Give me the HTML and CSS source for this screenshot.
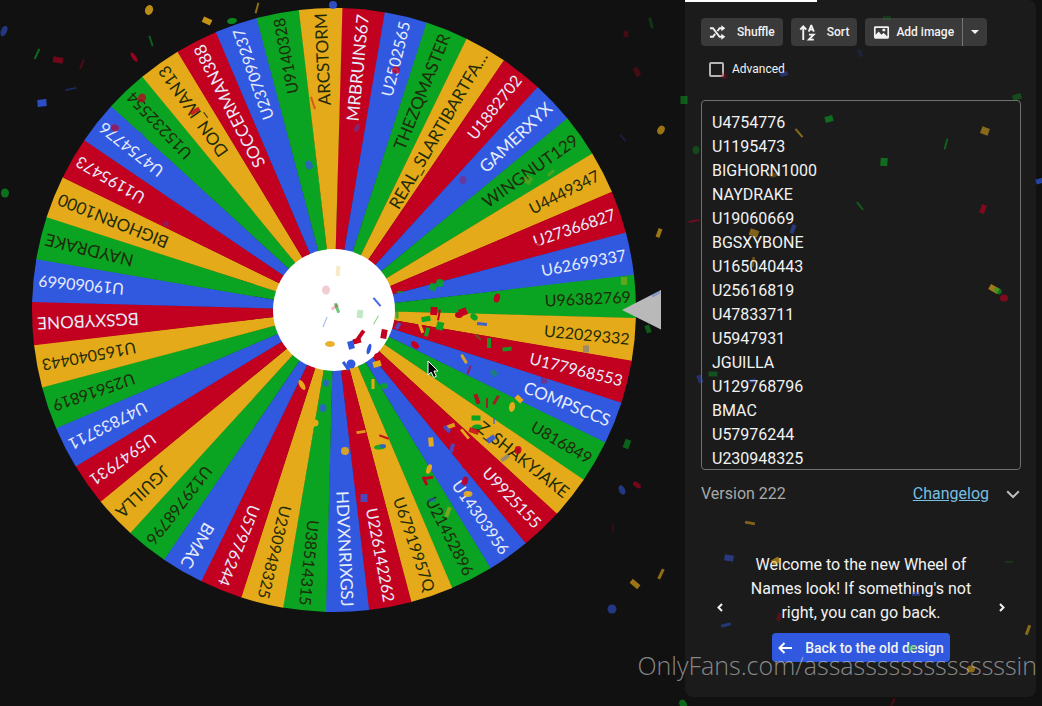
FILE: index.html
```html
<!DOCTYPE html>
<html lang="en">
<head>
<meta charset="utf-8">
<title>Wheel of Names</title>
<link rel="stylesheet" href="styles.css">
</head>
<body>
<div class="app">
  <main class="stage">
    <svg class="wheel" id="wheel" viewBox="0 0 685 706" role="img" aria-label="Wheel with 44 names"></svg>
  </main>

  <aside class="panel">
    <div class="tab-indicator"></div>
    <div class="panel-body">
      <div class="toolbar">
        <button class="btn" type="button">
          <svg class="icon" viewBox="0 0 18 18"><path class="stroke" d="M1 4.500h3.200l7 9H14M1 13.500h3.200l2.300-3M9 7.400l2.200-2.900H14"/><path d="M13 1.300 17.300 4.500 13 7.700zM13 10.300l4.300 3.200-4.300 3.200z"/></svg>
          <span>Shuffle</span>
        </button>
        <button class="btn" type="button">
          <svg class="icon" viewBox="0 0 18 18"><path class="stroke" d="M4.500 17V3M1.300 6 4.500 2.500 7.700 6"/><path class="thin" d="M10.300 8 12.800 1.800h.4L15.700 8M11.200 6h3.600M10.500 11.200h5L10.500 16.500h5.200"/></svg>
          <span>Sort</span>
        </button>
        <div class="split">
          <button class="btn split-main" type="button">
            <svg class="icon" viewBox="0 0 18 18"><path fill-rule="evenodd" d="M2.500 2.500h13A1.500 1.500 0 0 1 17 4v10a1.500 1.500 0 0 1-1.500 1.500h-13A1.500 1.500 0 0 1 1 14V4a1.500 1.500 0 0 1 1.500-1.500zM2.800 4.300v7.200L6 8l3 3.400 2.200-2.200 4 4V4.300zM10 5h3v2.600h-3z"/></svg>
            <span>Add image</span>
          </button>
          <button class="btn split-toggle" type="button" aria-label="More image options">
            <svg class="caret" viewBox="0 0 8 4"><path d="M0 0h8L4 4z"/></svg>
          </button>
        </div>
      </div>

      <label class="advanced"><input type="checkbox" class="checkbox"><span>Advanced</span></label>

      <textarea class="names" rows="15" aria-label="Names" spellcheck="false">U4754776
U1195473
BIGHORN1000
NAYDRAKE
U19060669
BGSXYBONE
U165040443
U25616819
U47833711
U5947931
JGUILLA
U129768796
BMAC
U57976244
U230948325</textarea>

      <div class="version">
        <span class="version-text">Version 222</span>
        <a class="changelog" href="#">Changelog</a>
        <button class="plain" type="button" aria-label="Expand">
          <svg class="chevron" viewBox="0 0 14 9"><path d="M1.200 1.300 7 7l5.800-5.700"/></svg>
        </button>
      </div>

      <section class="carousel">
        <button class="plain arrow" type="button" aria-label="Previous"><svg class="angle" viewBox="0 0 6 9"><path d="M5 1 1.500 4.500 5 8"/></svg></button>
        <div class="slide">
          <p class="welcome">Welcome to the new Wheel of Names look! If something's not right, you can go back.</p>
          <button class="back" type="button">
            <svg class="back-icon" viewBox="0 0 14 12"><path d="M14 6H1.500M6.500 1l-5 5 5 5"/></svg>
            <span>Back to the old design</span>
          </button>
        </div>
        <button class="plain arrow" type="button" aria-label="Next"><svg class="angle" viewBox="0 0 6 9"><path d="M1 1l3.500 3.500L1 8"/></svg></button>
      </section>
    </div>
  </aside>

  <svg class="confetti" id="confetti" viewBox="0 0 1042 706" preserveAspectRatio="xMinYMin meet" aria-hidden="true"></svg>
  <div class="watermark">OnlyFans.com/assassssssssssssssin</div>
</div>
<script src="wheel.js"></script>
</body>
</html>
```
FILE: styles.css
```css
* { box-sizing: border-box; }

body {
  margin: 0;
  background: #111111;
  color: #f2f2f2;
  font-family: Roboto, "Liberation Sans", sans-serif;
  font-size: 16px;
  line-height: 24px;
}

.app {
  position: relative;
  display: flex;
  align-items: flex-start;
  min-height: 100vh;
  overflow: hidden;
}

.stage { flex: 1; min-width: 0; }
.wheel { display: block; width: 100%; }

.red { fill: #c20020; }
.blue { fill: #3159e0; }
.green { fill: #0aa322; }
.yellow { fill: #e5aa19; }
.hub { fill: #ffffff; }
.pointer { fill: #b9b9b9; }
.cursor { fill: #000000; stroke: #ffffff; stroke-width: 1; }

.name {
  font-family: Lato, sans-serif;
  font-size: 17px;
  text-anchor: end;
}
.name-number { font-size: 16px; }
.name-light { fill: #e6ebfa; }
.name-dark { fill: #1f2a08; }

.panel {
  width: 351px;
  margin-right: 6px;
  background: #1b1b1b;
  border-radius: 0 8px 8px 8px;
}
.tab-indicator { width: 132px; height: 2px; background: #ffffff; }
.panel-body {
  display: flex;
  flex-direction: column;
  padding: 16px 15px 35px 16px;
}

button { font: inherit; color: inherit; border: 0; cursor: pointer; }

.toolbar { display: flex; gap: 8px; }
.btn {
  display: flex;
  align-items: center;
  gap: 11px;
  height: 28px;
  padding: 0 8px;
  border-radius: 4px;
  background: #3a3a3a;
  font-size: 12px;
  font-weight: 500;
  line-height: 20px;
}
.split { display: flex; }
.split-main { gap: 6px; border-radius: 4px 0 0 4px; border-right: 1px solid #747474; }
.split-toggle { border-radius: 0 4px 4px 0; }
.icon { width: 17px; height: 17px; fill: #f2f2f2; }
.stroke { fill: none; stroke: #f2f2f2; stroke-width: 2; }
.thin { fill: none; stroke: #f2f2f2; stroke-width: 2; }
.caret { width: 8px; height: 4px; fill: #f2f2f2; }

.advanced {
  display: flex;
  align-items: center;
  gap: 8px;
  height: 20px;
  margin: 13px 0 21px 8px;
  font-size: 12px;
}
.checkbox {
  appearance: none;
  width: 15px;
  height: 15px;
  margin: 0;
  border: 2px solid #b5b5b5;
  border-radius: 2px;
}

.names {
  display: block;
  width: 100%;
  height: 370px;
  padding: 10px 10px 0;
  border: 1px solid #707070;
  border-radius: 4px;
  background: transparent;
  color: #f2f2f2;
  font: inherit;
  resize: none;
  overflow: hidden;
}

.version { display: flex; align-items: center; margin-top: 12px; }
.version-text { flex: 1; color: #a8a8a8; }
.changelog { color: #77bfe0; }
.plain { display: flex; padding: 0; background: none; }
.chevron { width: 14px; height: 9px; margin: 0 1px 0 17px; fill: none; stroke: #bdbdbd; stroke-width: 2; }

.carousel {
  display: flex;
  align-items: center;
  margin: 47px 16px 0;
}
.arrow { width: 6px; }
.angle { width: 6px; height: 9px; fill: none; stroke: #f2f2f2; stroke-width: 2; }
.slide {
  flex: 1;
  display: flex;
  flex-direction: column;
  align-items: center;
  gap: 8px;
  padding: 0 24px;
}
.welcome { margin: 0; text-align: center; }
.back {
  display: flex;
  align-items: center;
  gap: 13px;
  height: 29px;
  padding: 0 6px;
  border-radius: 4px;
  background: #3159e0;
  font-size: 14px;
  font-weight: 500;
}
.back-icon { width: 14px; height: 12px; fill: none; stroke: #ffffff; stroke-width: 2; }

.confetti {
  position: absolute;
  top: 0;
  left: 0;
  width: 100%;
  pointer-events: none;
}

.watermark {
  position: absolute;
  right: 5px;
  bottom: 25px;
  color: rgba(200, 200, 200, 0.65);
  font-family: "Open Sans", "Noto Sans", sans-serif;
  font-size: 25px;
  font-weight: 300;
  line-height: 32px;
  white-space: nowrap;
  pointer-events: none;
}
```
FILE: wheel.js
```js
const NS = "http://www.w3.org/2000/svg";
const CX = 334, CY = 310, RADIUS = 302, HUB = 61, TEXT_RADIUS = 297;
const COLORS = ["red", "blue", "green", "yellow"];
const NAMES = [
  "MRBRUINS67", "U2502565", "THEZQMASTER", "REAL_SLARTIBARTFA…", "U1882702", "GAMERXYX",
  "WINGNUT129", "U4449347", "U27366827", "U62699337", "U96382769", "U22029332", "U177968553",
  "COMPSCCS", "U816849", "Z_SHAKYJAKE", "U9925155", "U14303956", "U21452896", "U67919957Q",
  "U226142262", "HDVXNRIXGSJ", "U38514315", "U230948325", "U57976244", "BMAC", "U129768796",
  "JGUILLA", "U5947931", "U47833711", "U25616819", "U165040443", "BGSXYBONE", "U19060669",
  "NAYDRAKE", "BIGHORN1000", "U1195473", "U4754776", "U15232554", "DON_IVAN13",
  "SOCCERMAN388", "U237099237", "U9140328", "ARCSTORM"
];
const START = -88.5;

function add(parent, tag, attrs, text) {
  const el = document.createElementNS(NS, tag);
  for (const key in attrs) el.setAttribute(key, attrs[key]);
  if (text) el.textContent = text;
  parent.appendChild(el);
  return el;
}

function point(deg) {
  const a = deg * Math.PI / 180;
  return (CX + RADIUS * Math.cos(a)).toFixed(2) + " " + (CY + RADIUS * Math.sin(a)).toFixed(2);
}

const wheel = document.getElementById("wheel");
const step = 360 / NAMES.length;
NAMES.forEach((name, i) => {
  const from = START + i * step;
  const color = COLORS[i % 4];
  add(wheel, "path", {
    class: color,
    d: `M${CX} ${CY}L${point(from)}A${RADIUS} ${RADIUS} 0 0 1 ${point(from + step + 0.1)}Z`
  });
});
NAMES.forEach((name, i) => {
  const mid = START + (i + 0.5) * step;
  const size = /^U\d/.test(name) ? " name-number" : "";
  add(wheel, "text", {
    class: "name" + size + (i % 4 < 2 ? " name-light" : " name-dark"),
    x: TEXT_RADIUS,
    y: 6,
    transform: `translate(${CX} ${CY}) rotate(${mid.toFixed(2)})`
  }, name);
});
add(wheel, "circle", { class: "hub", cx: CX, cy: CY, r: HUB });
add(wheel, "path", { class: "pointer", d: "M622 310 661 290V329.500Z" });

/* Confetti pieces: x, y, width, height, rotation, color, opacity, round */
const PIECES = [
  [149,10,8,10,20,"yellow",.8,1],[207,21,9,6,25,"yellow",.85,0],[232,21,10,6,-10,"green",.8,1],
  [257,8,2,11,15,"yellow",.6,0],[4,31,6,11,25,"blue",.55,1],[58,60,10,6,10,"red",.55,0],
  [37,54,2,11,25,"green",.6,0],[134,57,4,11,-35,"red",.75,1],[151,41,2,11,-18,"green",.55,0],
  [82,64,2,10,22,"red",.35,0],[71,89,11,2,-12,"blue",.35,0],[42,103,9,7,-5,"blue",.85,0],
  [5,193,8,9,0,"green",.65,1],[333,5,8,8,0,"blue",.85,1],[142,98,8,9,20,"red",.75,1],
  [115,128,8,7,20,"red",.65,1],[195,111,10,4,-30,"red",.8,0],[313,103,2,13,-18,"red",.45,0],
  [309,165,7,9,-25,"blue",.8,1],[141,135,7,8,0,"blue",.4,1],[166,224,6,6,0,"blue",.25,1],
  [332,33,7,8,0,"yellow",.7,1],[357,128,5,8,20,"blue",.4,1],[396,70,8,7,20,"red",.8,1],
  [463,180,7,8,0,"red",.35,1],[528,180,8,8,30,"yellow",.25,0],[551,173,8,3,-40,"yellow",.3,0],
  [651,23,3,11,-15,"green",.25,0],[626,34,5,7,0,"red",.3,1],[637,72,5,9,-25,"red",.3,0],
  [661,130,7,9,30,"yellow",.65,1],[659,233,4,9,20,"yellow",.65,0],[623,138,2,9,-40,"blue",.2,0],
  [537,246,9,6,5,"red",.7,1],[624,281,6,8,0,"yellow",.4,0],[656,294,9,3,-30,"blue",.35,0],
  [648,329,5,8,-20,"green",.5,0],[627,444,6,9,20,"green",.55,0],[622,490,6,10,-25,"blue",.55,1],
  [637,485,9,5,35,"red",.55,1],[612,609,9,9,0,"blue",.55,1],[635,584,10,5,40,"yellow",.65,0],
  [661,574,3,11,25,"yellow",.6,0],[613,528,2,9,0,"red",.2,0],[683,704,7,9,-30,"green",.6,1],
  [326,290,8,9,0,"red",.2,1],[338,271,4,10,5,"yellow",.25,0],[337,308,3,10,-20,"green",.6,0],
  [335,307,8,3,-35,"red",.25,0],[360,314,6,8,5,"green",.25,0],[377,302,2,11,-40,"blue",.9,0],
  [325,322,1,11,22,"blue",.5,0],[376,320,1,10,30,"green",.5,0],[330,344,10,6,0,"yellow",.9,1],
  [351,345,6,8,-15,"blue",1,0],[369,349,4,11,15,"blue",1,1],[357,341,8,5,-15,"red",1,0],
  [360,336,4,13,35,"red",1,0],[384,334,6,9,10,"red",1,0],[351,364,9,9,0,"blue",1,1],
  [346,366,3,10,-35,"blue",1,0],[378,357,8,8,0,"red",1,1],[377,364,8,6,-15,"yellow",1,0],
  [373,384,3,10,0,"yellow",1,0],[384,386,8,6,0,"green",.9,1],[326,383,6,7,0,"blue",.8,1],
  [323,408,7,8,0,"blue",.8,1],[302,385,5,11,-30,"yellow",1,1],[315,423,7,7,0,"yellow",1,1],
  [345,451,8,8,0,"yellow",.9,1],[364,498,7,8,0,"blue",.8,0],[440,283,8,8,0,"green",.9,1],
  [433,287,7,7,20,"green",.9,0],[497,298,6,9,15,"red",1,1],[434,311,7,8,5,"red",1,0],
  [439,315,2,11,10,"red",1,0],[459,315,8,6,-5,"red",1,1],[463,312,8,7,-20,"red",1,0],
  [426,319,9,5,-10,"green",1,0],[440,326,7,8,15,"green",1,0],[427,332,4,9,15,"green",1,0],
  [421,328,3,10,-20,"yellow",1,0],[474,317,8,6,40,"green",1,1],[482,324,10,3,5,"blue",.9,0],
  [397,315,3,7,0,"green",.7,0],[400,292,7,2,0,"green",.7,0],[398,326,7,4,-60,"blue",.8,0],
  [415,345,9,6,40,"red",1,1],[489,343,4,10,0,"green",.9,0],[507,349,9,4,-5,"green",.9,0],
  [478,337,8,2,45,"green",.5,0],[531,338,10,2,0,"yellow",.5,0],[464,359,3,10,-30,"yellow",.9,0],
  [469,370,2,9,20,"red",.7,0],[494,373,7,5,50,"green",.5,0],[586,349,6,7,0,"blue",.4,0],
  [544,380,6,7,0,"red",.4,0],[477,399,4,10,-20,"red",.9,0],[487,403,2,10,0,"red",.8,0],
  [496,400,3,10,30,"red",.8,0],[519,399,8,5,45,"yellow",1,0],[512,407,6,10,10,"yellow",1,1],
  [476,418,9,5,0,"green",1,0],[477,427,10,5,-5,"green",1,1],[474,431,10,5,20,"red",.8,0],
  [494,421,2,6,0,"blue",.6,0],[491,439,9,5,-35,"blue",.9,0],[518,450,7,8,10,"red",.9,1],
  [505,458,9,4,-35,"blue",.4,0],[451,426,8,4,-20,"yellow",.9,0],[447,429,8,4,45,"blue",.8,0],
  [465,434,3,12,-40,"yellow",1,0],[431,442,5,9,-5,"yellow",1,0],[452,448,4,9,15,"blue",.8,0],
  [429,469,5,10,20,"yellow",1,1],[428,478,10,3,-10,"red",1,0],[425,481,3,9,-25,"red",1,0],
  [361,432,9,3,-8,"yellow",.9,0],[384,437,10,2,20,"red",.9,0],[380,447,12,5,-5,"green",.9,1],
  [383,446,6,4,0,"blue",.8,1],[466,465,9,2,-35,"red",.8,0],[465,481,6,9,20,"red",.9,1],
  [468,494,9,6,0,"yellow",.9,1],[448,512,4,10,20,"yellow",.5,0],[432,500,7,4,0,"blue",.5,0],
  [684,100,7,8,0,"green",.5,0],[696,150,7,8,0,"green",.35,1],[724,76,6,5,20,"red",.3,0],
  [784,74,8,4,-15,"blue",.4,0],[1017,97,9,6,-20,"green",.35,0],[829,119,8,6,-15,"green",.6,0],
  [799,133,2,11,-40,"yellow",.55,0],[985,131,8,7,20,"yellow",.55,0],[946,144,2,11,15,"green",.5,0],
  [884,162,7,8,5,"green",.6,0],[773,175,8,5,0,"yellow",.3,1],[694,221,11,2,-10,"red",.5,0],
  [860,206,2,10,-38,"green",.45,0],[983,209,5,9,20,"red",.6,0],[754,233,9,7,20,"yellow",.5,0],
  [793,229,4,9,20,"blue",.5,0],[753,262,3,10,10,"yellow",.35,0],[994,289,10,6,30,"yellow",.65,0],
  [998,291,8,6,30,"green",.6,1],[1004,298,8,7,0,"red",.6,1],[1040,181,8,5,-15,"blue",.7,0],
  [713,374,9,5,0,"green",.4,0],[700,379,5,8,-20,"blue",.4,0],[752,381,8,4,-10,"blue",.3,0],
  [860,53,4,8,-25,"blue",.15,0],[887,18,8,4,0,"green",.2,0],[750,523,10,3,10,"yellow",.5,0],
  [729,558,9,6,10,"blue",.5,0],[776,561,8,6,-30,"yellow",.6,0],[726,625,10,3,-15,"blue",.45,0],
  [779,617,4,8,20,"red",.35,0],[916,594,8,4,0,"blue",.45,0],[1028,630,3,10,20,"yellow",.55,0],
  [912,648,8,6,0,"green",.4,0],[971,669,8,7,0,"yellow",.55,1],[1009,562,8,2,0,"green",.2,0],
  [893,702,2,8,25,"red",.35,0]
];
const confetti = document.getElementById("confetti");
PIECES.forEach(([x, y, w, h, rot, color, opacity, round]) => {
  const attrs = { class: color, opacity, transform: `translate(${x} ${y}) rotate(${rot})` };
  if (round) add(confetti, "ellipse", { ...attrs, rx: w / 2, ry: h / 2 });
  else add(confetti, "rect", { ...attrs, x: -w / 2, y: -h / 2, width: w, height: h });
});
add(confetti, "path", { class: "cursor", d: "M428 361v14l3.200-2.800 2.500 5.300 2.700-1.200-2.500-5.300h4.100z" });
```
